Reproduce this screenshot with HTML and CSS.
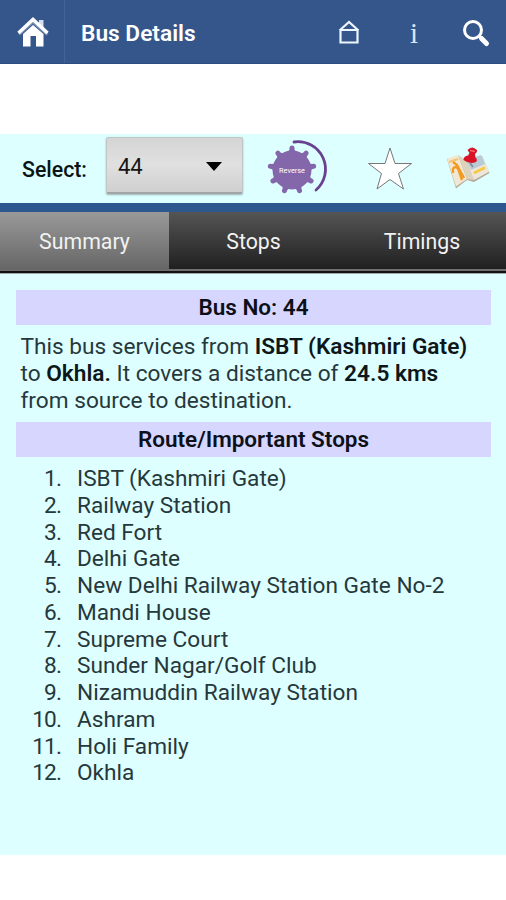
FILE: index.html
```html
<!DOCTYPE html>
<html lang="en">
<head>
    <meta charset="utf-8" />
    <meta name="viewport" content="width=device-width, initial-scale=1" />
    <title>Bus Details</title>
    <link rel="stylesheet" href="styles.css">
</head>
<body>
    <header class="header">
        <a class="home" href="#" aria-label="Home">
            <svg width="34" height="32" viewBox="0 0 34 32">
                <path d="M7 18 L17 9 L27.500 18 V30.500 H20 V20 H14.500 V30.500 H7 Z" fill="#fff"/>
                <path d="M23 4 h4.500 v8 l-4.500 -4 Z" fill="#d5deeb"/>
                <path d="M3 18.500 L17 6 L31.500 18.500" fill="none" stroke="#7189ad" stroke-width="3"/>
                <path d="M2.500 17 L17 3.500 L31.500 17" fill="none" stroke="#fff" stroke-width="3.500"/>
            </svg>
        </a>
        <h1>Bus Details</h1>
        <nav class="actions">
            <svg class="house" width="22" height="26" viewBox="0 0 22 26">
                <path d="M2.500 23.500 V11 H19.500 V23.500 Z M1.500 11.500 L11 3 L20.500 11.500" fill="none" stroke="#edf5ff" stroke-width="2.200"/>
            </svg>
            <span class="info">i</span>
            <svg class="search" width="30" height="30" viewBox="0 0 30 30">
                <circle cx="12" cy="12" r="8.500" fill="none" stroke="#fff" stroke-width="3"/>
                <path d="M18 18 L20 20" stroke="#fff" stroke-width="3"/>
                <path d="M20.500 20.500 L25.500 25.500" stroke="#fff" stroke-width="5" stroke-linecap="round"/>
            </svg>
        </nav>
    </header>

    <section class="toolbar">
        <label>Select:</label>
        <div class="dropdown">
            <span>44</span>
            <span class="arrow"></span>
        </div>
        <svg class="reverse" width="64" height="60" viewBox="0 0 64 60">
            <g transform="translate(27 33)" fill="#8367aa">
                <circle r="19.500"/>
                <g id="tooth"><path d="M-3.500 -18 L-2 -22 H2 L3.500 -18 Z"/><circle cy="-22" r="2.500"/></g>
                <use href="#tooth" transform="rotate(40)"/>
                <use href="#tooth" transform="rotate(80)"/>
                <use href="#tooth" transform="rotate(120)"/>
                <use href="#tooth" transform="rotate(160)"/>
                <use href="#tooth" transform="rotate(200)"/>
                <use href="#tooth" transform="rotate(240)"/>
                <use href="#tooth" transform="rotate(280)"/>
                <use href="#tooth" transform="rotate(320)"/>
            </g>
            <path d="M29 5 A27.500 27.500 0 0 1 51 53" fill="none" stroke="#69418f" stroke-width="2.800" stroke-linecap="round"/>
            <text x="27" y="36" text-anchor="middle">Reverse</text>
        </svg>
        <svg class="star" width="46" height="46" viewBox="0 0 46 46">
            <path d="M23 2 L28 17.500 L44.500 17.500 L31.500 27.500 L36.500 43 L23 33.500 L10 43 L14.500 27.500 L1.500 17.500 L18 17.500 Z" fill="#fff" stroke="#777" stroke-width="1"/>
        </svg>
        <svg class="map" width="46" height="44" viewBox="0 0 46 44">
            <path d="M1 12 L10 41.500 L21 33 L28 35 L43.500 26 L36 9 L17 13 L12 9 Z" fill="#b3aa98"/>
            <path d="M1 11.500 L12 8 L21 32 L10 39.500 Z" fill="#f2e7d3"/>
            <path d="M12 8 L20 13 L28 33 L21 32 Z" fill="#ddd2bc"/>
            <path d="M20 13 L35 8 L43.500 24.500 L28 33 Z" fill="#eee6da"/>
            <path d="M20 13 L35 8 L39 17 L25 23 Z" fill="#b9cbd7"/>
            <path d="M3 15 L12 12" stroke="#f6c36b" stroke-width="2"/>
            <path d="M7 26 C6 19 11 18 13 24 L16 33 M7 15 L11 18 L18 31" fill="none" stroke="#f39a20" stroke-width="2.400"/>
            <path d="M28 26 L39 20.500" stroke="#f5cb45" stroke-width="3"/>
            <path d="M24 16 L27 20" stroke="#888" stroke-width="1.500"/>
            <path d="M21.500 3 Q26 -2 31 3 Q31.500 5.500 29 7 L29.500 10.500 Q32 12.500 30 15 Q23 17.500 17.500 13 Q17.500 9 22 8.500 L23.500 6 Z" fill="#d91425"/>
            <path d="M24 3.500 L29 4.500" stroke="#f06a70" stroke-width="1.500"/>
        </svg>
    </section>

    <nav class="tabs">
        <a class="tab active" href="#">Summary</a>
        <a class="tab" href="#">Stops</a>
        <a class="tab" href="#">Timings</a>
    </nav>

    <main class="content">
        <h2>Bus No: 44</h2>
        <p>This bus services from <b>ISBT (Kashmiri Gate)</b><br>to <b>Okhla.</b> It covers a distance of <b>24.5 kms</b><br>from source to destination.</p>
        <h2>Route/Important Stops</h2>
        <ol class="stops">
            <li>ISBT (Kashmiri Gate)</li>
            <li>Railway Station</li>
            <li>Red Fort</li>
            <li>Delhi Gate</li>
            <li>New Delhi Railway Station Gate No-2</li>
            <li>Mandi House</li>
            <li>Supreme Court</li>
            <li>Sunder Nagar/Golf Club</li>
            <li>Nizamuddin Railway Station</li>
            <li>Ashram</li>
            <li>Holi Family</li>
            <li>Okhla</li>
        </ol>
    </main>
</body>
</html>
```
FILE: styles.css
```css
* {
    margin: 0;
    padding: 0;
    box-sizing: border-box;
}

body {
    font-family: Roboto, "Liberation Sans", sans-serif;
    background: #fff;
    color: #26383b;
    height: 900px;
    overflow: hidden;
}

a {
    color: inherit;
    text-decoration: none;
}

.header {
    height: 64px;
    display: flex;
    align-items: center;
    background: #35568a;
    border-bottom: 1px solid #2b4c84;
    color: #fff;
}

.home {
    width: 65px;
    height: 63px;
    padding: 16px 0 0 16px;
    border-right: 1px solid #426396;
}

.header h1 {
    margin: 4px 0 0 16px;
    font-size: 22.7px;
    font-weight: 600;
    line-height: 28px;
}

.actions {
    display: flex;
    align-items: center;
    margin-left: auto;
    padding-right: 15px;
}

.info {
    width: 20px;
    margin: 2px 37px 0 44px;
    text-align: center;
    font: 29px/30px "Liberation Serif", serif;
    color: #dce5f2;
}

.search {
    margin-top: 2px;
}

.toolbar {
    height: 69px;
    margin-top: 70px;
    display: flex;
    align-items: flex-start;
    background: #deffff;
}

.toolbar label {
    width: 84px;
    margin: 22px 0 0 22px;
    font-size: 21.3px;
    font-weight: 500;
    line-height: 28px;
    color: #0b1415;
}

.dropdown {
    width: 137px;
    height: 57px;
    margin-top: 3px;
    padding: 2px 20px 0 11px;
    display: flex;
    align-items: center;
    justify-content: space-between;
    font-size: 22px;
    color: #151515;
    background: linear-gradient(#d5d5d5, #e0e0e0 50%, #cfcfcf);
    border: 1px solid #bfc6c6;
    border-bottom: 2px solid #a0a4a4;
    border-radius: 2px;
    box-shadow: 0 1px 2px rgba(0, 0, 0, 0.3);
}

.arrow {
    border: 8px solid transparent;
    border-top: 9px solid #000;
    border-bottom: 0;
}

.reverse {
    margin: 3px 0 0 22px;
}

.reverse text {
    font-size: 7.3px;
    font-weight: 400;
    fill: #fff;
}

.star {
    margin: 12px 0 0 38px;
}

.map {
    margin: 13px 0 0 33px;
}

.tabs {
    height: 71px;
    display: grid;
    grid-template-columns: 169px 169px 168px;
    background: linear-gradient(#555, #202020 57px, #707070 57px, #707070 59px, #111 59px, #111 61px, #9ba9a9 61px);
    border-top: 9px solid #2e568f;
}

.tab {
    height: 58px;
    text-align: center;
    font-size: 21.3px;
    line-height: 59px;
    color: #f2f2f2;
}

.tab.active {
    background: linear-gradient(#999, #666);
}

.content {
    height: 581px;
    padding: 16px 15px 0 16px;
    background: #deffff;
}

.content h2 {
    height: 35px;
    background: #d6d6ff;
    font-size: 22.5px;
    font-weight: 600;
    line-height: 35px;
    text-align: center;
    color: #0d1018;
}

.content p {
    padding: 8px 0 8px 4.5px;
    font-size: 22.65px;
    line-height: 27px;
    white-space: nowrap;
}

.content b {
    font-weight: 600;
    color: #0d1719;
}

.stops {
    padding-top: 9px;
    font-size: 22.65px;
    line-height: 26.75px;
    list-style: none;
    counter-reset: stop;
}

.stops li {
    display: flex;
    gap: 16px;
    counter-increment: stop;
}

.stops li::before {
    content: counter(stop) ".";
    width: 45px;
    text-align: right;
    letter-spacing: -0.9px;
}
```
